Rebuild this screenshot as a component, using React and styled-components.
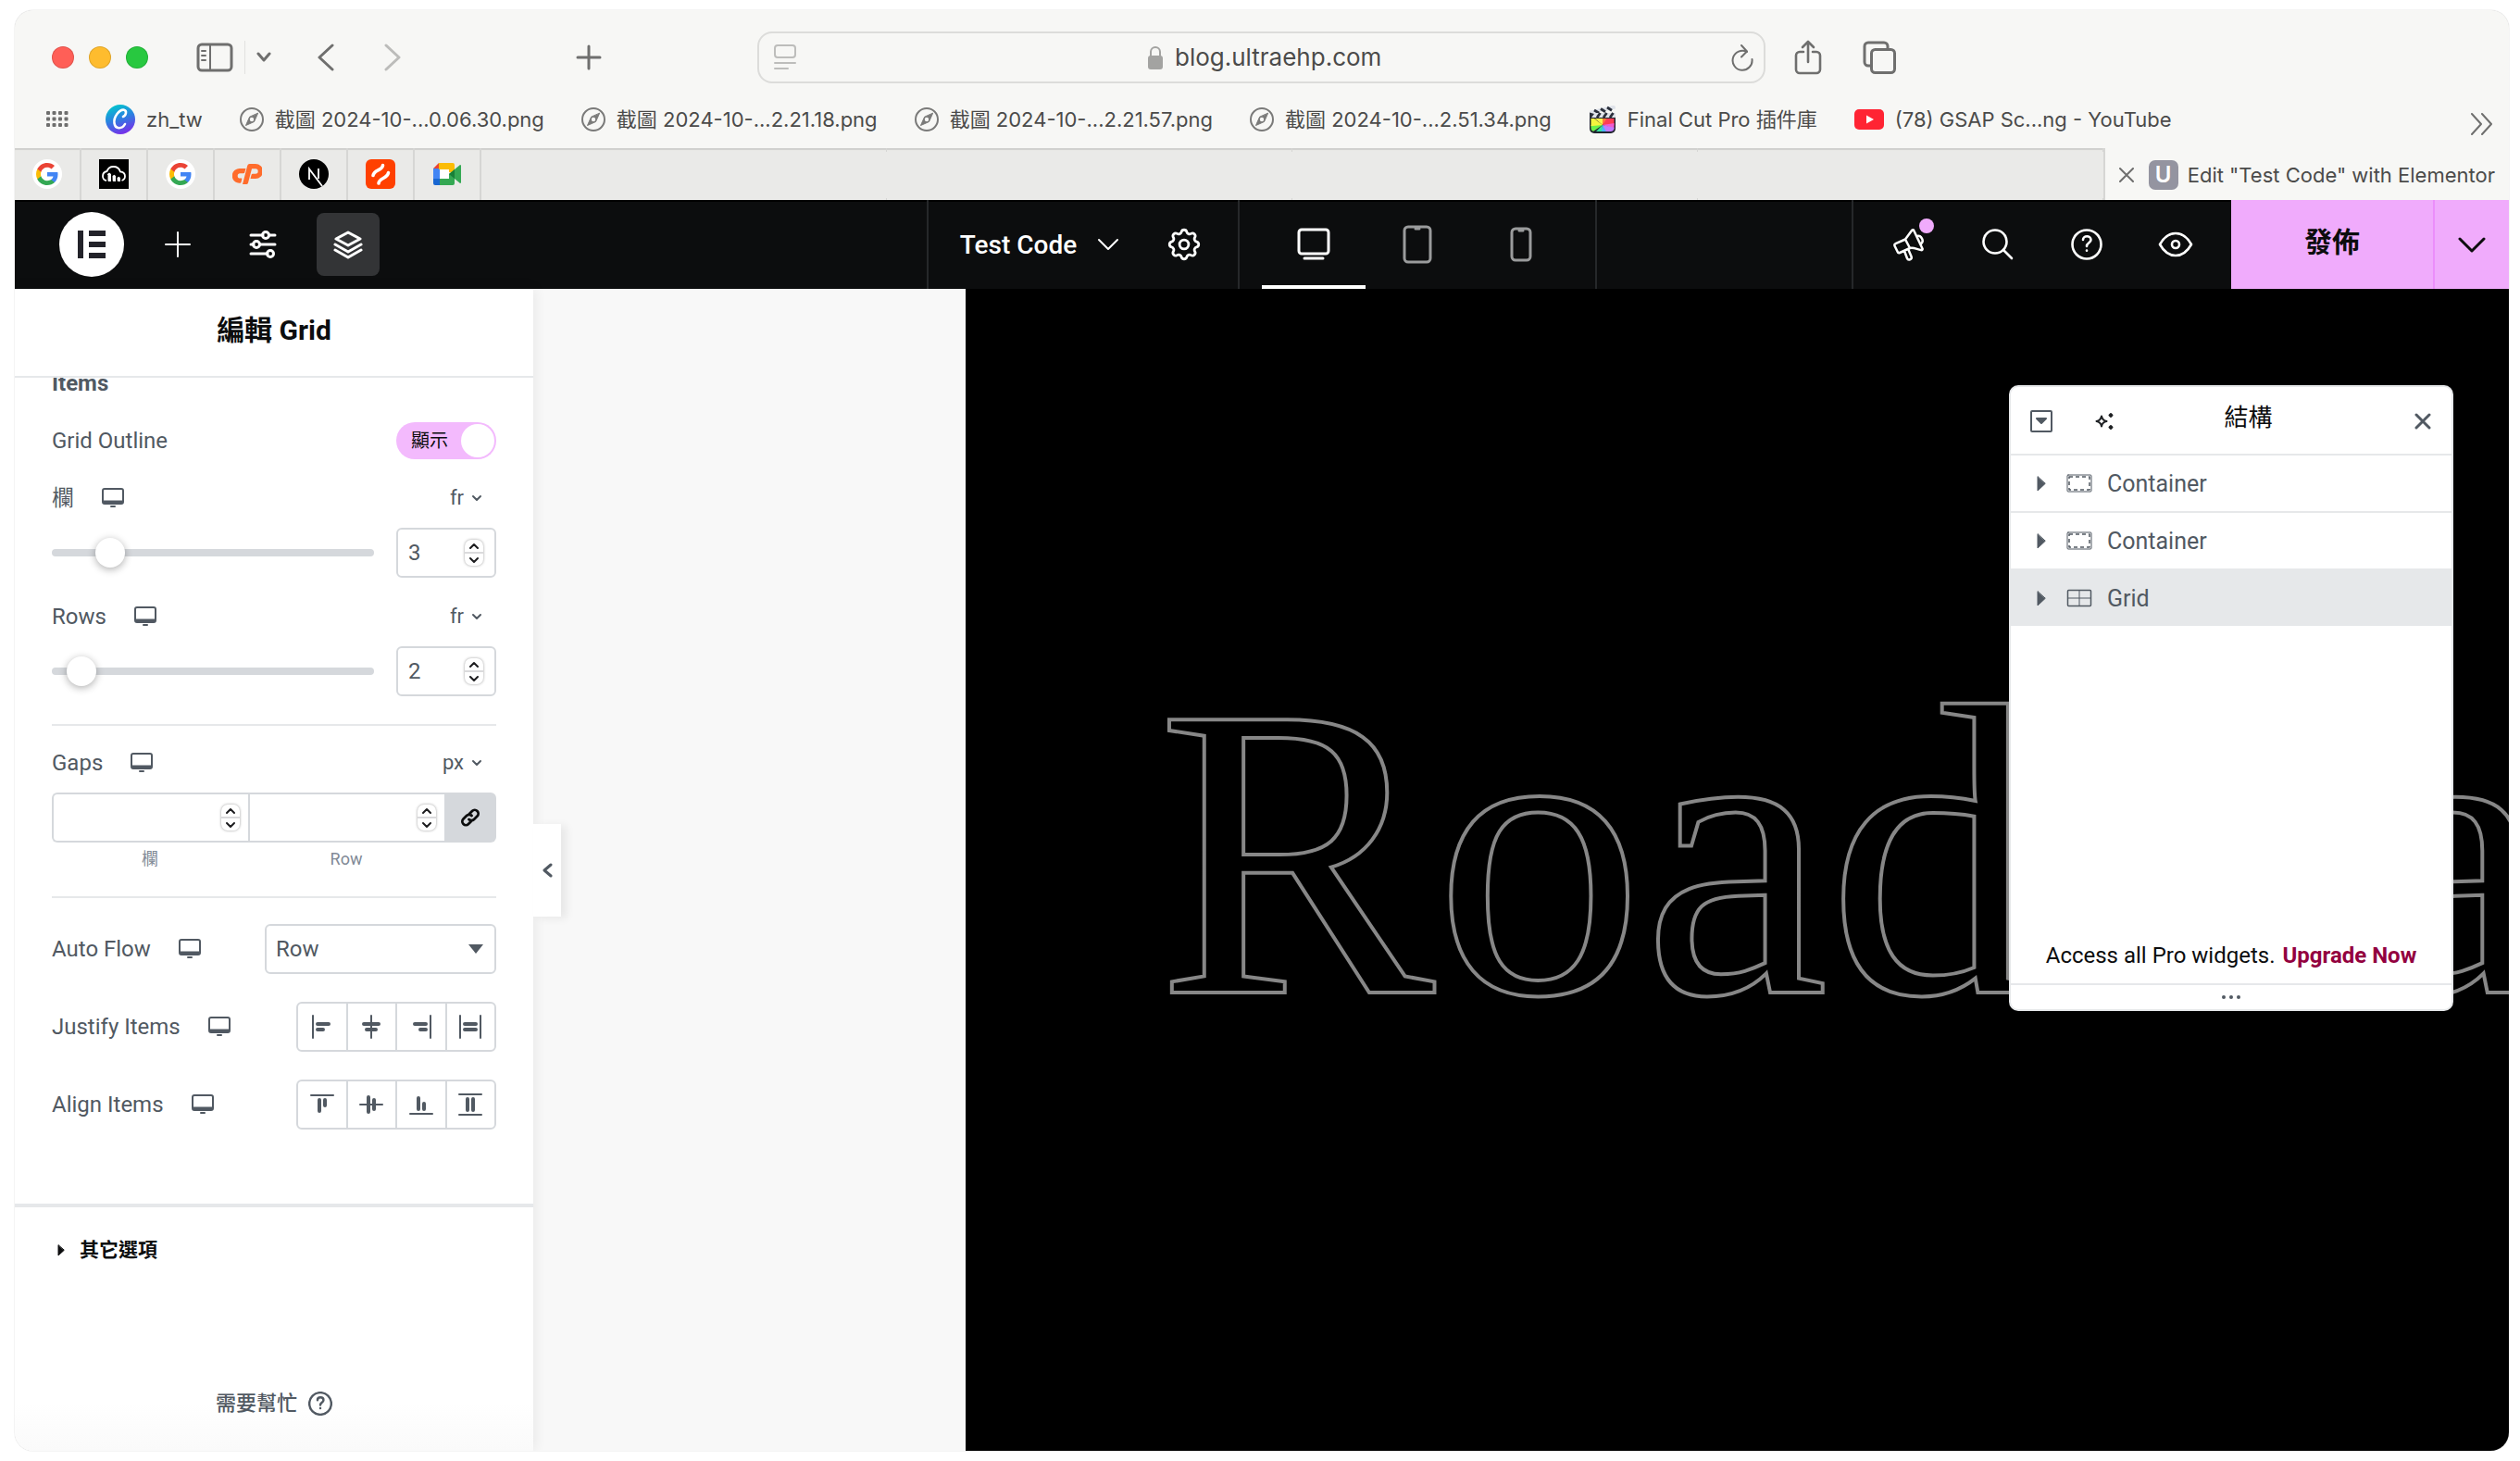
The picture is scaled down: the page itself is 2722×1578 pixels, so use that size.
import React, { useState } from "react";
import styled, { createGlobalStyle, css } from "styled-components";

const sans = `Roboto, "Noto Sans CJK TC", sans-serif`;
const chrome = `Inter, "Noto Sans CJK TC", sans-serif`;

const color = {
  bar: "#f7f7f5",
  strip: "#eaeae8",
  line: "#d6d6d4",
  ink: "#4b4b4a",
  glyph: "#6f6f6e",
  editor: "#0c0d0e",
  text: "#515962",
  border: "#d5d8dc",
  rule: "#e6e8ea",
  pink: "#f0abfc",
};

const GlobalStyle = createGlobalStyle`
  * { box-sizing: border-box; }
  body { margin: 0; background: #fff; }
  button, input, select { font: inherit; color: inherit; margin: 0; padding: 0; border: 0; background: none; }
  button { cursor: pointer; }
  h1, h2, h3, p, ul { margin: 0; padding: 0; }
  ul { list-style: none; }
  svg { display: block; flex: none; }
  a { color: inherit; text-decoration: none; }
`;

const Desktop = styled.div`
  height: 100vh;
  padding: 11px 12px 11px 16px;
  font-family: ${sans};
`;

const Window = styled.div`
  height: 100%;
  display: flex;
  flex-direction: column;
  border-radius: 20px;
  overflow: hidden;
  background: #fff;
  box-shadow: 0 0 1px rgba(0, 0, 0, 0.45);
`;

/* ---------- Safari window ---------- */

const ToolBar = styled.header`
  flex: none;
  height: 101px;
  display: grid;
  grid-template-columns: 802fr 1089fr 803fr;
  align-items: center;
  background: ${color.bar};
  color: ${color.glyph};
  font-family: ${chrome};
`;

const BarSide = styled.div`
  display: flex;
  align-items: center;
  gap: ${(p) => p.$gap || 0}px;
  padding: ${(p) => p.$pad};
`;

const Lights = styled.div`
  display: flex;
  gap: 16px;
  margin-right: 52px;
`;

const Light = styled.button`
  width: 24px;
  height: 24px;
  border-radius: 50%;
  background: ${(p) => p.$color};
  box-shadow: inset 0 0 0 1px rgba(0, 0, 0, 0.12);
`;

const PlainButton = styled.button`
  display: flex;
  align-items: center;
  justify-content: center;
`;

const Split = styled.span`
  width: 1px;
  height: 36px;
  margin: 0 12px;
  background: #e2e2e0;
`;

const NavPair = styled.div`
  display: flex;
  gap: 54px;
  margin-left: 50px;
`;

const NewTab = styled(PlainButton)`
  margin-left: auto;
`;

const Address = styled.form`
  height: 56px;
  display: flex;
  align-items: center;
  justify-content: space-between;
  padding: 0 11px 0 16px;
  border: 2px solid #dcdcda;
  border-radius: 16px;
  color: ${color.ink};
`;

const AddressText = styled.label`
  display: flex;
  align-items: center;
  gap: 12px;
  font-size: 26px;

  input {
    width: 222px;
    height: 40px;
    outline: none;
  }
`;

const Bookmarks = styled.nav`
  flex: none;
  height: 48px;
  display: flex;
  align-items: flex-start;
  padding: 0 16px 0 34px;
  background: ${color.bar};
  color: ${color.ink};
  font-family: ${chrome};
`;

const BookmarkList = styled.div`
  flex: 1;
  display: flex;
  gap: 40px;
  margin-left: 40px;
`;

const Bookmark = styled.a`
  display: flex;
  align-items: center;
  gap: 12px;
  height: 34px;
  font-size: 22px;
  line-height: 26px;
  white-space: nowrap;
`;

const BookmarkTool = styled(PlainButton)`
  height: ${(p) => (p.$low ? 44 : 34)}px;
  color: ${color.glyph};
`;

const TabStrip = styled.div`
  flex: none;
  height: 56px;
  display: flex;
  background: ${color.strip};
  box-shadow: inset 0 2px 1px #cfcfcd;
  font-family: ${chrome};
`;

const PinnedTab = styled.button`
  width: 72px;
  display: flex;
  align-items: center;
  justify-content: center;
  border-right: 2px solid ${color.line};
`;

const BlankTab = styled.button`
  flex: 1;
  border-right: 1px solid;
  border-image: linear-gradient(${color.line} 5px, transparent 5px, transparent 53px, ${color.line} 53px) 1;
`;

const ActiveTab = styled.div`
  flex: none;
  display: flex;
  align-items: center;
  gap: 10px;
  padding: 2px 15px 0;
  border-left: 2px solid ${color.line};
  background: ${color.bar};
  color: ${color.ink};
  font-size: 22px;
  white-space: nowrap;
`;

const CloseTab = styled(PlainButton)`
  margin-right: 6px;
`;

const SiteBadge = styled.span`
  width: 32px;
  height: 32px;
  border-radius: 7px;
  background: #9494a0;
  color: #fff;
  font-size: 24px;
  font-weight: 600;
  line-height: 32px;
  text-align: center;
`;

/* ---------- Elementor top bar ---------- */

const EditorBar = styled.header`
  flex: none;
  height: 96px;
  display: grid;
  grid-template-columns: 1fr auto 1fr;
  background: ${color.editor};
  box-shadow: inset 0 2px 0 #000;
  color: #fff;
`;

const BarGroup = styled.div`
  display: flex;
  align-items: center;
  justify-content: ${(p) => (p.$end ? "flex-end" : "flex-start")};
  gap: ${(p) => p.$gap || 0}px;
  padding: ${(p) => p.$pad || "0"};
  ${(p) => p.$rule && css`align-self: stretch; border-left: 2px solid #26282a;`}
  ${(p) => p.$ruleEnd && css`border-right: 2px solid #26282a;`}
`;

const Logo = styled(PlainButton)`
  width: 70px;
  height: 70px;
  border-radius: 50%;
  background: #fff;
`;

const IconButton = styled(PlainButton)`
  position: relative;
  width: 68px;
  height: 68px;
  border-radius: 8px;
  background: ${(p) => (p.$on ? "#333436" : "transparent")};
`;

const Dot = styled.span`
  position: absolute;
  top: 6px;
  right: 7px;
  width: 16px;
  height: 16px;
  border-radius: 50%;
  background: ${color.pink};
`;

const DocButton = styled(PlainButton)`
  gap: 22px;
  font-size: 28px;
  font-weight: 500;
  margin-right: 36px;
`;

const Device = styled(PlainButton)`
  width: 112px;
  height: 96px;
  color: ${(p) => (p.$on ? "#fff" : "#9a9b9c")};
  border-top: 4px solid transparent;
  border-bottom: 4px solid ${(p) => (p.$on ? "#fff" : "transparent")};
`;

const Publish = styled.div`
  align-self: stretch;
  display: flex;
  background: ${color.pink};
  color: ${color.editor};
`;

const PublishButton = styled.button`
  width: 218px;
  padding-bottom: 4px;
  font-size: 30px;
  line-height: 36px;
  font-weight: 700;
`;

const PublishMore = styled(PlainButton)`
  width: 82px;
  border-left: 2px solid #eb8efb;
`;

/* ---------- Workspace ---------- */

const Workspace = styled.main`
  flex: 1;
  min-height: 0;
  display: flex;
`;

const Panel = styled.aside`
  position: relative;
  z-index: 1;
  flex: none;
  width: 560px;
  display: flex;
  flex-direction: column;
  background: #fff;
  box-shadow: 0 0 14px rgba(0, 0, 0, 0.09);
  color: ${color.text};
  font-size: 24px;
`;

const PanelHeader = styled.div`
  flex: none;
  height: 96px;
  display: flex;
  align-items: center;
  justify-content: center;
  padding-bottom: 4px;
  border-bottom: 2px solid ${color.rule};
  color: ${color.editor};
`;

const PanelTitle = styled.h1`
  font-size: 30px;
  font-weight: 700;
  line-height: 36px;
`;

const PanelBody = styled.div`
  flex: 1;
  min-height: 0;
  overflow: hidden;
`;

const Controls = styled.section`
  display: flex;
  flex-direction: column;
  padding: 0 40px 80px;
  margin-top: -6px;
  border-bottom: 4px solid ${color.rule};
`;

const GroupTitle = styled.h2`
  font-size: 24px;
  line-height: 24px;
  font-weight: 700;
  margin-bottom: 30px;
`;

const Row = styled.div`
  display: flex;
  align-items: center;
  justify-content: space-between;
  margin-bottom: ${(p) => p.$after || 0}px;
  ${(p) => p.$head && css`height: 32px; margin-bottom: 16px;`}
`;

const LabelGroup = styled.div`
  display: flex;
  align-items: center;
  gap: 30px;
  line-height: 32px;
`;

const Unit = styled(PlainButton)`
  gap: 8px;
  font-size: 22px;
  line-height: 32px;
  padding-right: 15px;
`;

const Toggle = styled.label`
  width: 108px;
  height: 40px;
  display: flex;
  align-items: center;
  justify-content: space-between;
  padding: 0 2px 0 16px;
  border-radius: 20px;
  background: #f3bafd;
  color: ${color.editor};
  font-size: 20px;
  line-height: 32px;

  input {
    appearance: none;
    width: 36px;
    height: 36px;
    border-radius: 50%;
    background: #fff;
  }
`;

const Track = styled.div`
  width: 348px;
  height: 8px;
  display: flex;
  align-items: center;
  border-radius: 4px;
  background: ${color.border};
`;

const Range = styled.input.attrs({ type: "range" })`
  appearance: none;
  flex: 1;
  height: 32px;
  margin: 0 -16px;

  &::-webkit-slider-thumb {
    appearance: none;
    width: 32px;
    height: 32px;
    border-radius: 50%;
    background: #fff;
    box-shadow: 0 2px 8px rgba(0, 0, 0, 0.32);
  }
`;

const NumberBox = styled.div`
  width: ${(p) => (p.$wide ? "auto" : "108px")};
  flex: ${(p) => (p.$wide ? 1 : "none")};
  min-width: 0;
  height: 54px;
  display: flex;
  align-items: center;
  padding: 0 12px 0 11px;
  border: 2px solid ${color.border};
  border-radius: 6px;

  input {
    appearance: textfield;
    flex: 1;
    min-width: 0;
    height: 40px;
    outline: none;
  }
  input::-webkit-inner-spin-button { display: none; }
`;

const Stepper = styled.div`
  width: 20px;
  height: 28px;
  display: flex;
  flex-direction: column;
  border-radius: 7px;
  background: #fff;
  box-shadow: 0 0 3px rgba(0, 0, 0, 0.4);
  color: #1d1d1f;

  button {
    flex: 1;
    display: flex;
    align-items: center;
    justify-content: center;
  }
  button + button { border-top: 2px solid #dadadc; }
`;

const LinkedInputs = styled.div`
  display: flex;
  margin-bottom: 8px;

  ${NumberBox} { padding-right: 9px; border-right-width: 0; }
  ${NumberBox}:nth-child(1) { border-radius: 6px 0 0 6px; }
  ${NumberBox}:nth-child(2) { border-radius: 0; }
`;

const LinkButton = styled(PlainButton)`
  width: 56px;
  border-radius: 0 6px 6px 0;
  background: ${color.border};
  color: ${color.editor};
`;

const SubLabels = styled.div`
  display: flex;
  padding-right: 56px;
  font-size: 18px;
  line-height: 20px;
  color: #818a96;
  text-align: center;

  label { flex: 1; }
`;

const Divider = styled.hr`
  width: 100%;
  height: 2px;
  margin: 30px 0 ${(p) => p.$after}px;
  border: 0;
  background: ${color.rule};
`;

const SelectBox = styled.div`
  width: 250px;
  height: 54px;
  display: grid;
  align-items: center;
  border: 2px solid ${color.border};
  border-radius: 6px;

  select, svg { grid-area: 1 / 1; }
  select {
    appearance: none;
    height: 50px;
    padding-left: 10px;
    outline: none;
  }
  svg {
    justify-self: end;
    margin-right: 12px;
    pointer-events: none;
  }
`;

const Choices = styled.div`
  width: 216px;
  height: 54px;
  display: flex;
  border: 2px solid ${color.border};
  border-radius: 6px;

  button {
    flex: 1;
    display: flex;
    align-items: center;
    justify-content: center;
  }
  button + button { border-left: 2px solid ${color.border}; }
`;

const Section = styled.button`
  width: 100%;
  height: 94px;
  display: flex;
  align-items: center;
  gap: 16px;
  padding: 0 46px 2px;
  color: ${color.editor};
  font-size: 21px;
  line-height: 32px;
  font-weight: 700;
`;

const Help = styled.a`
  flex: none;
  height: 102px;
  display: flex;
  align-items: center;
  justify-content: center;
  gap: 12px;
  font-size: 22px;
  line-height: 28px;
  font-weight: 500;
  background: linear-gradient(#fff 50%, #fafafa);
`;

const Collapse = styled(PlainButton)`
  position: absolute;
  left: 100%;
  top: 578px;
  width: 30px;
  height: 100px;
  background: #fff;
  box-shadow: 6px 2px 10px rgba(0, 0, 0, 0.07);
`;

const Gutter = styled.div`
  flex: none;
  width: 467px;
  background: #f8f8f8;
`;

const Canvas = styled.section`
  position: relative;
  flex: 1;
  min-width: 0;
  overflow: hidden;
  padding: 383px 0 0 207px;
  background: #000;
`;

const Headline = styled.h2`
  font-family: "Liberation Serif", serif;
  font-size: 450px;
  line-height: 450px;
  font-weight: 400;
  white-space: nowrap;
  color: transparent;
  -webkit-text-stroke: 4px #878787;
`;

/* ---------- Structure window ---------- */

const Navigator = styled.aside`
  position: absolute;
  top: 104px;
  right: 60px;
  width: 480px;
  height: 676px;
  display: flex;
  flex-direction: column;
  border: 2px solid ${color.rule};
  border-radius: 10px;
  overflow: hidden;
  background: #fff;
  color: ${color.text};
`;

const NavHeader = styled.header`
  flex: none;
  height: 74px;
  display: grid;
  grid-template-columns: 1fr auto 1fr;
  align-items: center;
  padding: 2px 22px 0 21px;
  border-bottom: 2px solid ${color.rule};
`;

const NavTools = styled.div`
  display: flex;
  align-items: center;
  gap: 45px;
`;

const NavTitle = styled.h3`
  padding: 0 0 8px 38px;
  font-size: 26px;
  font-weight: 400;
  line-height: 32px;
  color: ${color.editor};
`;

const NavClose = styled(PlainButton)`
  justify-self: end;
`;

const NavList = styled.ul`
  flex: 1;
`;

const NavItem = styled.li`
  height: 62px;
  border-bottom: 2px solid ${(p) => (p.$on ? "#fff" : color.rule)};
  background: ${(p) => (p.$on ? color.rule : "#fff")};

  button {
    width: 100%;
    height: 60px;
    display: flex;
    align-items: center;
    padding-left: 28px;
    font-size: 25px;
  }
  svg:first-child { margin-right: 22px; }
  svg:last-of-type { margin-right: 16px; }
`;

const NavFooter = styled.p`
  padding-bottom: 14px;
  font-size: 24px;
  line-height: 32px;
  text-align: center;
  color: ${color.editor};

  a {
    margin-left: 2px;
    font-weight: 700;
    color: #93003f;
  }
`;

const NavGrip = styled.div`
  height: 28px;
  display: flex;
  align-items: center;
  justify-content: center;
  border-top: 2px solid ${color.rule};
`;

/* ---------- Drawings ---------- */

const Svg = ({ w, h, sw = 3, children, ...rest }) => (
  <svg width={w} height={h} viewBox={`0 0 ${w} ${h}`} fill="none" stroke="currentColor"
    strokeWidth={sw} strokeLinecap="round" strokeLinejoin="round" aria-hidden="true" {...rest}>
    {children}
  </svg>
);

const Compass = () => (
  <Svg w={26} h={26} sw={2} color="#7a7a79">
    <circle cx="13" cy="13" r="12" />
    <path d="M19.500 6.500 15.500 15.500 6.500 19.500 10.500 10.500Z" fill="currentColor" strokeWidth="1" />
    <circle cx="13" cy="13" r="2.200" fill="#f7f7f5" stroke="none" />
  </Svg>
);

const CanvaMark = () => (
  <svg width="32" height="32" viewBox="0 0 32 32" aria-hidden="true">
    <defs>
      <linearGradient id="canva" x1="0.300" y1="0" x2="0.650" y2="1">
        <stop offset="0" stopColor="#02c6cd" />
        <stop offset="0.450" stopColor="#2a83e0" />
        <stop offset="1" stopColor="#7b2bea" />
      </linearGradient>
    </defs>
    <circle cx="16" cy="16" r="16" fill="url(#canva)" />
    <path d="M19 13c3-1 4.500-6.500 1-7.300C15 5 8.500 13 9.500 20c1 7 8.500 6.500 11.500 1" fill="none" stroke="#fff" strokeWidth="2.600" strokeLinecap="round" />
  </svg>
);

const FinalCut = () => (
  <svg width="30" height="32" viewBox="0 0 30 32" aria-hidden="true">
    <rect x="1" y="10" width="28" height="21" rx="5" fill="#20242e" />
    <clipPath id="fcp"><path d="M2.500 15h25v10a4 4 0 0 1-4 4h-17a4 4 0 0 1-4-4Z" /></clipPath>
    <g clipPath="url(#fcp)">
      <path d="M15 22-5 5h20Z" fill="#fff04a" />
      <path d="M15 22V0h20Z" fill="#ff7a3c" />
      <path d="M15 22 26 5h14v18Z" fill="#ff3d55" />
      <path d="M15 22 40 18v12Z" fill="#f05bd0" />
      <path d="M15 22 40 28v14H22Z" fill="#c17bff" />
      <path d="M15 22 26 42H10Z" fill="#4ab4ff" />
      <path d="M15 22 12 42H-5Z" fill="#34e3a0" />
      <path d="M15 22-8 38V22Z" fill="#6cf04a" />
      <path d="M15 22-8 24V4Z" fill="#f5f53e" />
    </g>
    <path d="M1.500 6.500 26 1q3-.500 3 2v1.500L2.500 10Q1 10 1 8.500Z" fill="#dfe3ea" />
    <path d="M6 6 11 9M13 4.500l5 3.200M20 3l5 3.200" stroke="#2b303b" strokeWidth="2.800" />
    <rect x="1" y="9" width="28" height="5" rx="1" fill="#dfe3ea" />
    <path d="M9 14l3.500-5M16 14l3.500-5M23 14l3.500-5" stroke="#2b303b" strokeWidth="2.800" />
    <path d="M1 8.500 6 10 3 14H1Z" fill="#2b303b" />
  </svg>
);

const YouTube = () => (
  <svg width="32" height="22" viewBox="0 0 32 22" aria-hidden="true">
    <rect width="32" height="22" rx="5" fill="#ff2433" />
    <path d="M13 6.500v9l8-4.500Z" fill="#fff" />
  </svg>
);

const GoogleMark = () => (
  <svg width="32" height="32" viewBox="0 0 32 32" aria-hidden="true">
    <circle cx="16" cy="16" r="16" fill="#fff" />
    <g transform="translate(4 4)">
      <path fill="#4285f4" d="M23.500 12.300c0-.800-.100-1.600-.200-2.300H12v4.500h6.500c-.300 1.500-1.100 2.700-2.400 3.600v3h3.900c2.200-2.100 3.500-5.100 3.500-8.800Z" />
      <path fill="#34a853" d="M12 24c3.200 0 6-1.100 8-2.900l-3.900-3c-1.100.700-2.500 1.200-4.100 1.200-3.100 0-5.800-2.100-6.700-5H1.300v3.100C3.300 21.300 7.300 24 12 24Z" />
      <path fill="#fbbc05" d="M5.300 14.300c-.500-1.500-.500-3.100 0-4.600V6.600H1.300c-1.700 3.400-1.700 7.400 0 10.800Z" />
      <path fill="#ea4335" d="M12 4.800c1.800 0 3.300.600 4.600 1.800L20 3.100C17.900 1.200 15.200 0 12 0 7.300 0 3.300 2.700 1.300 6.600l4 3.100c.900-2.800 3.600-4.900 6.700-4.900Z" />
    </g>
  </svg>
);

const CloudMark = () => (
  <svg width="32" height="32" viewBox="0 0 32 32" aria-hidden="true">
    <path fill="#000" d="M0 0h32v32H0Z" />
    <path d="M8 23C5 22.500 4 20.500 4 18.200c0-2.700 2-4.700 4.500-5.200C9.500 10 12 8 15.500 8c3.700 0 6.300 2 7.300 5.300 3 .300 5.200 2.300 5.200 5 0 2.200-1 4-3.500 4.700" fill="none" stroke="#fff" strokeWidth="1.800" />
    <path d="M9 16l2-1.500 2 1.500v8h-2.500q-1 0-1-1v-6H9ZM14.500 18l1.800-1.200 1.700 1.200v6h-2.300q-1 0-1-1ZM19.500 20l1.800-1.200L23 20v4h-2.300q-1 0-1-1Z" fill="#fff" />
  </svg>
);

const CpanelMark = () => (
  <svg width="32" height="22" viewBox="0 0 32 22" fill="#ff6c2c" aria-hidden="true">
    <path d="M8 5h6.500l-1.200 4.300q-.300 1-1.400 1H8.300a2.600 2.600 0 0 0 0 5.200h1.500q.800 0 .500.900l-.900 3.600q-.200.800-1 .800H7.300A7.800 7.800 0 0 1 8 5Z" />
    <path d="M11 22 16.200 2q.500-2 2.300-2H25a7.500 7.500 0 0 1 0 16h-5.500l1.100-4.300q.300-1 1.300-1H25a2.700 2.700 0 0 0 0-5.400h-4L17 20.500q-.400 1.500-1.900 1.500Z" />
  </svg>
);

const NextMark = () => (
  <svg width="32" height="32" viewBox="0 0 32 32" fill="none" stroke="#fff" aria-hidden="true">
    <circle cx="16" cy="16" r="16" fill="#000" stroke="none" />
    <path d="M11 22V10.500L25 29" strokeWidth="1.800" />
    <path d="M21 10v11" strokeWidth="1.800" />
  </svg>
);

const FlameMark = () => (
  <svg width="32" height="32" viewBox="0 0 32 32" fill="none" stroke="#fff" strokeWidth="3.600" strokeLinecap="round" aria-hidden="true">
    <rect width="32" height="32" rx="6" fill="#ff4000" stroke="none" />
    <path d="M18.500 6.500C18.500 12 9 11 8 17.500M24.500 14.500C23.500 21 14.500 20 14 26" />
  </svg>
);

const MeetMark = () => (
  <svg width="30" height="24" viewBox="0 0 30 24" aria-hidden="true">
    <path d="M0 6 6 0v6Z" fill="#ea4335" />
    <path d="M0 6h7v11H0Z" fill="#4285f4" />
    <path d="M0 17h7v7H2a2 2 0 0 1-2-2Z" fill="#1967d2" />
    <path d="M6 0h15a2 2 0 0 1 2 2v8h-6V7H6Z" fill="#fbbc04" />
    <path d="M7 17h10v-5h6v10a2 2 0 0 1-2 2H7Z" fill="#34a853" />
    <path d="m17 12 12-10q1 0 1 1v18q0 1-1 1Z" fill="#34a853" />
    <path d="m17 12 6-5v10Z" fill="#188038" />
    <path d="M7 7h10v10H7Z" fill="#fff" />
  </svg>
);

const Monitor = () => (
  <Svg w={24} h={22} sw={2}>
    <rect x="1" y="1" width="22" height="16" rx="2" />
    <path d="M1 15h22" strokeWidth="3" strokeLinecap="butt" />
    <path d="M10 20h4" />
  </Svg>
);

const ChevronDown = ({ w = 24, h = 14, sw = 3 }) => (
  <Svg w={w} h={h} sw={sw}><path d={`M2 2 ${w / 2} ${h - 2} ${w - 2} 2`} /></Svg>
);

const Triangle = ({ w, h }) => (
  <Svg w={w} h={h} sw={1} fill="currentColor"><path d={`M1 1v${h - 2}L${w - 1} ${h / 2}Z`} /></Svg>
);

const Question = ({ size, sw }) => (
  <Svg w={size} h={size} sw={sw} viewBox="0 0 34 34">
    <circle cx="17" cy="17" r="15.500" />
    <path d="M13 12c0-5 8.500-5 8.500 0 0 3.500-4.500 3-4.500 7M17 23.500v.200" />
  </Svg>
);

const glyphs = {
  start: <><path d="M2 2v24" strokeWidth="2" /><path d="M7 11h12M7 17h6" strokeWidth="4" /></>,
  center: <><path d="M12 2v24" strokeWidth="2" /><path d="M4 11h16M7 17h10" strokeWidth="4" /></>,
  end: <><path d="M22 2v24" strokeWidth="2" /><path d="M5 11h12M11 17h6" strokeWidth="4" /></>,
  stretch: <><path d="M1 2v24M23 2v24" strokeWidth="2" /><path d="M6 11h12M6 17h12" strokeWidth="4" /></>,
};

const AlignIcon = ({ kind, vertical }) => (
  <Svg w={28} h={28}>
    <g transform={vertical ? "matrix(0 1 1 0 0 2)" : "translate(2 0)"}>{glyphs[kind]}</g>
  </Svg>
);

/* ---------- Parts ---------- */

const bookmarks = [
  { icon: <CanvaMark />, text: "zh_tw" },
  { icon: <Compass />, text: "截圖 2024-10-...0.06.30.png" },
  { icon: <Compass />, text: "截圖 2024-10-...2.21.18.png" },
  { icon: <Compass />, text: "截圖 2024-10-...2.21.57.png" },
  { icon: <Compass />, text: "截圖 2024-10-...2.51.34.png" },
  { icon: <FinalCut />, text: "Final Cut Pro 插件庫" },
  { icon: <YouTube />, text: "(78) GSAP Sc...ng - YouTube" },
];

const pinned = [
  ["Google", <GoogleMark />],
  ["Cloudinary", <CloudMark />],
  ["Google", <GoogleMark />],
  ["cPanel", <CpanelMark />],
  ["Next.js", <NextMark />],
  ["Hotjar", <FlameMark />],
  ["Meet", <MeetMark />],
];

function Steps({ onStep }) {
  return (
    <Stepper>
      <button type="button" aria-label="Increase" onClick={() => onStep(1)}>
        <Svg w={12} h={8} sw={2}><path d="M2 6 6 2l4 4" /></Svg>
      </button>
      <button type="button" aria-label="Decrease" onClick={() => onStep(-1)}>
        <Svg w={12} h={8} sw={2}><path d="M2 2l4 4 4-4" /></Svg>
      </button>
    </Stepper>
  );
}

function SliderControl({ id, label, initial, after }) {
  const [value, setValue] = useState(initial);
  return (
    <>
      <Row $head>
        <LabelGroup><label htmlFor={id}>{label}</label><Monitor /></LabelGroup>
        <Unit type="button">fr <ChevronDown w={12} h={8} sw={2} /></Unit>
      </Row>
      <Row $after={after}>
        <Track>
          <Range min="1" max="12" value={value} aria-label={label} onChange={(e) => setValue(Number(e.target.value))} />
        </Track>
        <NumberBox>
          <input id={id} type="number" value={value} onChange={(e) => setValue(Number(e.target.value))} />
          <Steps onStep={(d) => setValue(value + d)} />
        </NumberBox>
      </Row>
    </>
  );
}

function GapInput({ id }) {
  const [value, setValue] = useState("");
  return (
    <NumberBox $wide>
      <input id={id} type="number" value={value} onChange={(e) => setValue(e.target.value)} />
      <Steps onStep={(d) => setValue(String(Number(value) + d))} />
    </NumberBox>
  );
}

function AlignControl({ label, vertical, after }) {
  return (
    <Row $after={after}>
      <LabelGroup><span>{label}</span><Monitor /></LabelGroup>
      <Choices role="group" aria-label={label}>
        {Object.keys(glyphs).map((kind) => (
          <button key={kind} type="button" aria-label={kind}><AlignIcon kind={kind} vertical={vertical} /></button>
        ))}
      </Choices>
    </Row>
  );
}

function BrowserChrome() {
  return (
    <>
      <ToolBar>
        <BarSide $pad="0 168px 0 40px">
          <Lights>
            <Light $color="#ff5f57" aria-label="Close" />
            <Light $color="#febc2e" aria-label="Minimize" />
            <Light $color="#28c840" aria-label="Zoom" />
          </Lights>
          <PlainButton aria-label="Sidebar">
            <Svg w={40} h={32} sw={3}>
              <rect x="2" y="2" width="36" height="28" rx="4" />
              <path d="M15 2v28" strokeWidth="2" />
              <path d="M6 9h4M6 14h4M6 19h4" strokeWidth="2" />
            </Svg>
          </PlainButton>
          <Split />
          <PlainButton aria-label="Tab groups"><ChevronDown w={16} h={11} sw={3} /></PlainButton>
          <NavPair>
            <PlainButton aria-label="Back"><Svg w={18} h={30}><path d="M16 2 2 15l14 13" /></Svg></PlainButton>
            <PlainButton aria-label="Forward"><Svg w={18} h={30} color="#bcbcba"><path d="m2 2 14 13L2 28" /></Svg></PlainButton>
          </NavPair>
          <NewTab aria-label="New tab"><Svg w={28} h={28}><path d="M14 2v24M2 14h24" /></Svg></NewTab>
        </BarSide>
        <Address onSubmit={(e) => e.preventDefault()}>
          <Svg w={24} h={28} sw={2} color="#bdbdbb">
            <rect x="1" y="1" width="22" height="13" rx="3" />
            <path d="M1 20h22M1 26h14" />
          </Svg>
          <AddressText>
            <svg width="18" height="26" viewBox="0 0 18 26" aria-hidden="true">
              <path d="M4 12V7a5 5 0 0 1 10 0v5" fill="none" stroke="#a3a3a1" strokeWidth="2" />
              <rect x="1" y="11" width="16" height="15" rx="3" fill="#a3a3a1" />
            </svg>
            <input aria-label="Address" defaultValue="blog.ultraehp.com" />
          </AddressText>
          <PlainButton type="button" aria-label="Reload">
            <Svg w={24} h={30} sw={2} color={color.glyph}>
              <path d="M17 9A10.500 10.500 0 1 0 22.500 17M11 2l6 6.500-6 6" />
            </Svg>
          </PlainButton>
        </Address>
        <BarSide $gap={44} $pad="0 0 0 31px">
          <PlainButton aria-label="Share">
            <Svg w={30} h={38}>
              <path d="M10 13H6a4 4 0 0 0-4 4v15a4 4 0 0 0 4 4h18a4 4 0 0 0 4-4V17a4 4 0 0 0-4-4h-4M15 24V2M9 8l6-6 6 6" strokeWidth="2.600" />
            </Svg>
          </PlainButton>
          <PlainButton aria-label="Tab overview">
            <Svg w={36} h={36}>
              <rect x="9.500" y="9.500" width="25" height="25" rx="4" />
              <path d="M8 27H6a4 4 0 0 1-4-4V6a4 4 0 0 1 4-4h17a4 4 0 0 1 4 4v2" />
            </Svg>
          </PlainButton>
        </BarSide>
      </ToolBar>

      <Bookmarks>
        <BookmarkTool aria-label="Show bookmarks">
          <svg width="24" height="18" fill={color.glyph} aria-hidden="true">
            {[0, 1, 2].map((r) => [0, 1, 2, 3].map((c) => (
              <rect key={`${r}${c}`} x={c * 6.500} y={r * 6.500} width="4" height="4" rx="1" />
            )))}
          </svg>
        </BookmarkTool>
        <BookmarkList>
          {bookmarks.map((b) => <Bookmark key={b.text} href="#">{b.icon}{b.text}</Bookmark>)}
        </BookmarkList>
        <BookmarkTool $low aria-label="More bookmarks">
          <Svg w={26} h={24} sw={2}><path d="m2 1 10 11L2 23M13 1l10 11-10 11" /></Svg>
        </BookmarkTool>
      </Bookmarks>

      <TabStrip>
        {pinned.map(([name, icon], i) => <PinnedTab key={i} aria-label={name}>{icon}</PinnedTab>)}
        <BlankTab aria-label="Tab" />
        <BlankTab aria-label="Tab" />
        <BlankTab aria-label="Tab" />
        <BlankTab aria-label="Tab" />
        <ActiveTab>
          <CloseTab aria-label="Close tab"><Svg w={16} h={16} sw={2} color={color.glyph}><path d="m1 1 14 14M15 1 1 15" /></Svg></CloseTab>
          <SiteBadge>U</SiteBadge>
          <span>Edit "Test Code" with Elementor</span>
        </ActiveTab>
      </TabStrip>
    </>
  );
}

function TopBar() {
  return (
    <EditorBar>
      <BarGroup $gap={24} $pad="0 0 0 48px">
        <Logo aria-label="Elementor">
          <svg width="30" height="30" fill="#23232a" aria-hidden="true">
            <path d="M0 0h6v30H0ZM12 0h18v6H12ZM12 12h18v6H12ZM12 24h18v6H12Z" />
          </svg>
        </Logo>
        <IconButton aria-label="Add element"><Svg w={28} h={28} sw={2}><path d="M14 1v26M1 14h26" /></Svg></IconButton>
        <IconButton aria-label="Site settings">
          <Svg w={30} h={30} sw={3}>
            <path d="M2 5h13M22 5h6M2 15h3M12 15h16M2 25h18" />
            <circle cx="18" cy="5" r="3.500" /><circle cx="8" cy="15" r="3.500" /><circle cx="23" cy="25" r="3.500" />
          </Svg>
        </IconButton>
        <IconButton $on aria-label="Structure">
          <Svg w={32} h={32} sw={3}>
            <path d="M16 3 29 10 16 17 3 10ZM2 16l14 8 14-8M2 22l14 8 14-8" />
          </Svg>
        </IconButton>
      </BarGroup>
      <BarGroup>
        <BarGroup $rule $pad="0 24px 0 34px">
          <DocButton>Test Code <ChevronDown w={24} h={14} sw={2} /></DocButton>
          <IconButton aria-label="Page settings">
            <Svg w={42} h={42} viewBox="0 0 24 24" sw={1.600}>
              <path d="M10.325 4.317c.426-1.756 2.924-1.756 3.350 0a1.724 1.724 0 0 0 2.573 1.066c1.543-.940 3.310.826 2.370 2.370a1.724 1.724 0 0 0 1.065 2.572c1.756.426 1.756 2.924 0 3.350a1.724 1.724 0 0 0-1.066 2.573c.940 1.543-.826 3.310-2.370 2.370a1.724 1.724 0 0 0-2.572 1.065c-.426 1.756-2.924 1.756-3.350 0a1.724 1.724 0 0 0-2.573-1.066c-1.543.940-3.310-.826-2.370-2.370a1.724 1.724 0 0 0-1.065-2.572c-1.756-.426-1.756-2.924 0-3.350a1.724 1.724 0 0 0 1.066-2.573c-.940-1.543.826-3.310 2.370-2.370 1 .608 2.296.070 2.572-1.065Z" />
              <circle cx="12" cy="12" r="2.800" />
            </Svg>
          </IconButton>
        </BarGroup>
        <BarGroup $rule $ruleEnd $pad="0 24px">
          <Device $on aria-label="Desktop">
            <Svg w={36} h={36} sw={3}><rect x="2" y="2" width="32" height="26" rx="3" /><path d="M8 33h20" /></Svg>
          </Device>
          <Device aria-label="Tablet">
            <Svg w={32} h={42} sw={3}><rect x="2" y="2" width="28" height="38" rx="4" /><path d="M14 4h4" /></Svg>
          </Device>
          <Device aria-label="Mobile">
            <Svg w={24} h={38} sw={3}><rect x="2" y="2" width="20" height="34" rx="4" /><path d="M10 4h4" /></Svg>
          </Device>
        </BarGroup>
      </BarGroup>
      <BarGroup $end>
        <BarGroup $rule $gap={28} $pad="0 26px">
          <IconButton aria-label="What's new">
            <Svg w={36} h={36} sw={2.500}>
              <path d="M21 3c1-1 2-1 2.500.500l9 19c.500 1-.500 2-1.500 1.500-5-1-8-3-12-2L8 27c-1 .300-2-.200-2.300-1L2.500 19.500c-.300-1 .200-2 1-2.300L14 12.500ZM14 12.500 19 22M27 9c4-1 8 5 4 8.500M13 25l3 8c1 2.500 6 1.500 4.500-2L17 22.800" />
            </Svg>
            <Dot />
          </IconButton>
          <IconButton aria-label="Finder">
            <Svg w={36} h={36} sw={2.600}><circle cx="15" cy="15" r="12.500" /><path d="m24 24 9 9" /></Svg>
          </IconButton>
          <IconButton aria-label="Help"><Question size={34} sw={2.600} /></IconButton>
          <IconButton aria-label="Preview">
            <Svg w={38} h={28} sw={2.600}><path d="M2 14C11-2 27-2 36 14 27 30 11 30 2 14Z" /><circle cx="19" cy="14" r="4" /></Svg>
          </IconButton>
        </BarGroup>
        <Publish>
          <PublishButton>發佈</PublishButton>
          <PublishMore aria-label="Save options"><ChevronDown w={30} h={17} sw={3} /></PublishMore>
        </Publish>
      </BarGroup>
    </EditorBar>
  );
}

function EditPanel() {
  return (
    <Panel>
      <PanelHeader><PanelTitle>編輯 Grid</PanelTitle></PanelHeader>
      <PanelBody>
        <Controls>
          <GroupTitle>Items</GroupTitle>
          <Row $after={26}>
            <label htmlFor="outline">Grid Outline</label>
            <Toggle>顯示<input id="outline" type="checkbox" defaultChecked /></Toggle>
          </Row>
          <SliderControl id="columns" label="欄" initial={3} after={26} />
          <SliderControl id="rows" label="Rows" initial={2} />
          <Divider $after={24} />
          <Row $head>
            <LabelGroup><span>Gaps</span><Monitor /></LabelGroup>
            <Unit type="button">px <ChevronDown w={12} h={8} sw={2} /></Unit>
          </Row>
          <LinkedInputs>
            <GapInput id="gap-column" />
            <GapInput id="gap-row" />
            <LinkButton aria-label="Link values">
              <Svg w={24} h={24} sw={3} viewBox="0 0 24 24">
                <path d="M10.500 8.500 14 5a3.800 3.800 0 0 1 5.500 5.500L16 14a3.800 3.800 0 0 1-5.500 0M13.500 15.500 10 19a3.800 3.800 0 0 1-5.500-5.500L8 10a3.800 3.800 0 0 1 5.500 0" strokeWidth="2.800" />
              </Svg>
            </LinkButton>
          </LinkedInputs>
          <SubLabels><label htmlFor="gap-column">欄</label><label htmlFor="gap-row">Row</label></SubLabels>
          <Divider $after={28} />
          <Row $after={30}>
            <LabelGroup><label htmlFor="flow">Auto Flow</label><Monitor /></LabelGroup>
            <SelectBox>
              <select id="flow" defaultValue="Row"><option>Row</option><option>Column</option></select>
              <svg width="16" height="10" fill="currentColor" aria-hidden="true"><path d="M0 0h16L8 10Z" /></svg>
            </SelectBox>
          </Row>
          <AlignControl label="Justify Items" after={30} />
          <AlignControl label="Align Items" vertical />
        </Controls>
        <Section type="button"><Triangle w={8} h={13} />其它選項</Section>
      </PanelBody>
      <Help href="#">需要幫忙 <Question size={26} sw={3.200} /></Help>
      <Collapse aria-label="Hide panel"><Svg w={11} h={16} sw={3}><path d="M9 2 2 8l7 6" /></Svg></Collapse>
    </Panel>
  );
}

const ContainerIcon = () => (
  <Svg w={28} h={20} sw={1}>
    <rect x="1" y="1" width="26" height="18" rx="1" />
    <rect x="3" y="3" width="22" height="14" strokeDasharray="4 3" strokeLinecap="butt" strokeWidth="1.500" />
  </Svg>
);

const GridIcon = () => (
  <Svg w={28} h={20} sw={1}><rect x="1.500" y="1.500" width="25" height="17" rx="1" strokeWidth="1.500" /><path d="M14 2v16M2 10h24" /></Svg>
);

function StructureWindow() {
  return (
    <Navigator>
      <NavHeader>
        <NavTools>
          <PlainButton aria-label="Expand all">
            <Svg w={24} h={24} sw={2}><rect x="1" y="1" width="22" height="22" rx="1" /><path d="M7 9h10l-5 5Z" fill="currentColor" /></Svg>
          </PlainButton>
          <PlainButton aria-label="AI">
            <Svg w={22} h={22} sw={2} color="#1f2124">
              <path d="M8 5.500c.700 3.500 2.200 5 5.500 5.500-3.300.500-4.800 2-5.500 5.500-.700-3.500-2.200-5-5.500-5.500 3.300-.500 4.800-2 5.500-5.500Z" />
              <path d="m18 3 1.500 1.500L18 6l-1.500-1.500ZM18 16l1.500 1.500L18 19l-1.500-1.500Z" fill="currentColor" />
            </Svg>
          </PlainButton>
        </NavTools>
        <NavTitle>結構</NavTitle>
        <NavClose aria-label="Close"><Svg w={18} h={18} sw={3}><path d="m2 2 14 14M16 2 2 16" /></Svg></NavClose>
      </NavHeader>
      <NavList>
        <NavItem><button><Triangle w={10} h={17} /><ContainerIcon />Container</button></NavItem>
        <NavItem><button><Triangle w={10} h={17} /><ContainerIcon />Container</button></NavItem>
        <NavItem $on><button><Triangle w={10} h={17} /><GridIcon />Grid</button></NavItem>
      </NavList>
      <NavFooter>Access all Pro widgets. <a href="#">Upgrade Now</a></NavFooter>
      <NavGrip>
        <svg width="22" height="6" fill="currentColor" aria-hidden="true">
          <circle cx="3" cy="3" r="2" /><circle cx="11" cy="3" r="2" /><circle cx="19" cy="3" r="2" />
        </svg>
      </NavGrip>
    </Navigator>
  );
}

export default function App() {
  return (
    <>
      <GlobalStyle />
      <Desktop>
        <Window>
          <BrowserChrome />
          <TopBar />
          <Workspace>
            <EditPanel />
            <Gutter />
            <Canvas>
              <Headline>Roadmap</Headline>
              <StructureWindow />
            </Canvas>
          </Workspace>
        </Window>
      </Desktop>
    </>
  );
}
